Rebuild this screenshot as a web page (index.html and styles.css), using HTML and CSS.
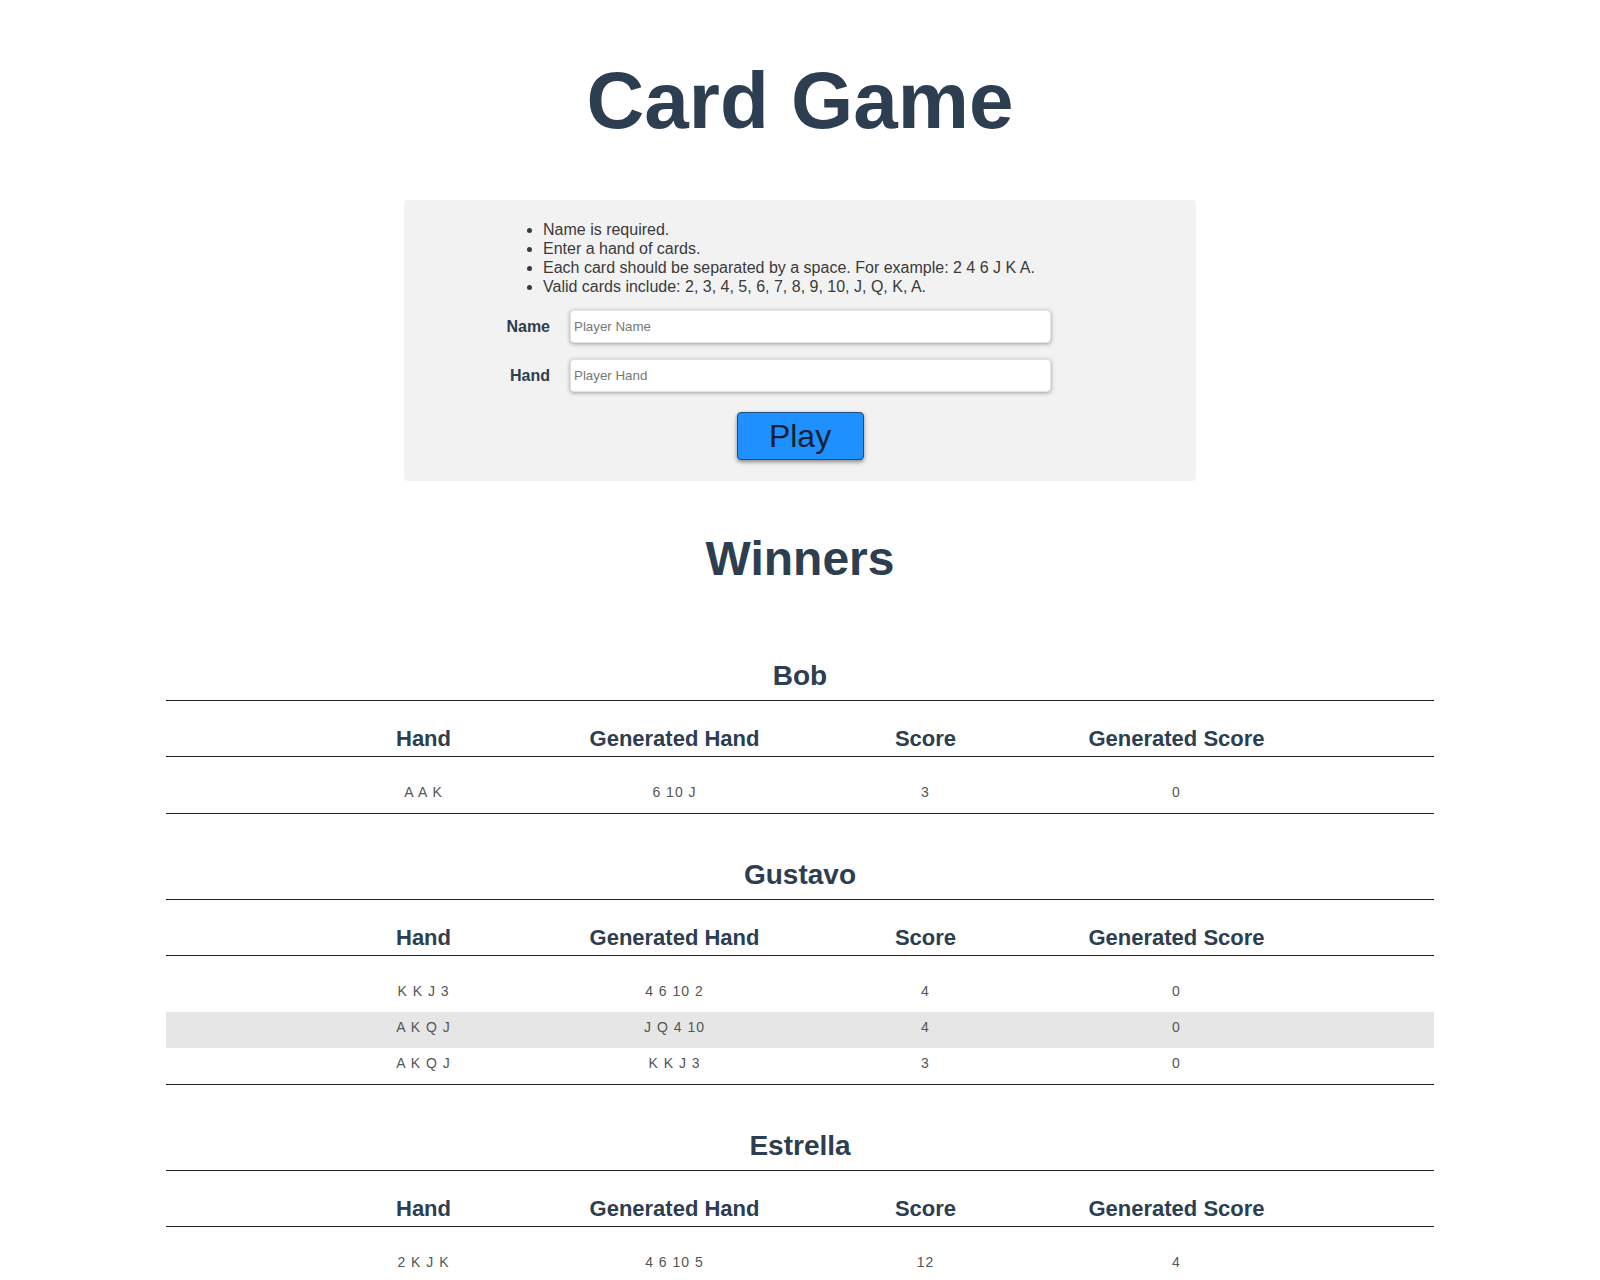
FILE: index.html
```html
<!DOCTYPE html>
<html lang="en">
<head>
<meta charset="utf-8">
<title>Card Game</title>
<link rel="stylesheet" href="styles.css">
</head>
<body>
<div class="app">
  <h1 class="title">Card Game</h1>

  <form class="panel">
    <div class="panel-inner">
      <ul class="rules">
        <li>Name is required.</li>
        <li>Enter a hand of cards.</li>
        <li>Each card should be separated by a space. For example: 2 4 6 J K A.</li>
        <li>Valid cards include: 2, 3, 4, 5, 6, 7, 8, 9, 10, J, Q, K, A.</li>
      </ul>
      <div class="field">
        <label class="field-label" for="name">Name</label>
        <input class="field-input" id="name" type="text" placeholder="Player Name">
      </div>
      <div class="field">
        <label class="field-label" for="hand">Hand</label>
        <input class="field-input" id="hand" type="text" placeholder="Player Hand">
      </div>
    </div>
    <div class="actions">
      <button class="play-btn" type="button">Play</button>
    </div>
  </form>

  <h2 class="winners-title">Winners</h2>

  <section class="player">
    <h3 class="player-name">Bob</h3>
    <div class="scores">
      <div class="row head"><div>Hand</div><div>Generated Hand</div><div>Score</div><div>Generated Score</div></div>
      <div class="rows">
        <div class="row"><div>A A K</div><div>6 10 J</div><div>3</div><div>0</div></div>
      </div>
    </div>
  </section>

  <section class="player">
    <h3 class="player-name">Gustavo</h3>
    <div class="scores">
      <div class="row head"><div>Hand</div><div>Generated Hand</div><div>Score</div><div>Generated Score</div></div>
      <div class="rows">
        <div class="row"><div>K K J 3</div><div>4 6 10 2</div><div>4</div><div>0</div></div>
        <div class="row"><div>A K Q J</div><div>J Q 4 10</div><div>4</div><div>0</div></div>
        <div class="row"><div>A K Q J</div><div>K K J 3</div><div>3</div><div>0</div></div>
      </div>
    </div>
  </section>

  <section class="player">
    <h3 class="player-name">Estrella</h3>
    <div class="scores">
      <div class="row head"><div>Hand</div><div>Generated Hand</div><div>Score</div><div>Generated Score</div></div>
      <div class="rows">
        <div class="row"><div>2 K J K</div><div>4 6 10 5</div><div>12</div><div>4</div></div>
      </div>
    </div>
  </section>
</div>
</body>
</html>
```

FILE: styles.css
```css
body {
  margin: 8px;
  font-family: "Liberation Sans", Arial, Helvetica, sans-serif;
  color: #2c3e50;
  background: #ffffff;
}

.app {
  text-align: center;
}

.title {
  font-size: 80px;
  font-weight: bold;
  line-height: normal;
  margin: 47px 0 53px;
}

.panel {
  width: 792px;
  margin: 0 auto;
  box-sizing: border-box;
  padding: 20px 0 21px;
  background: #f2f2f2;
  border-radius: 4px;
}

.panel-inner {
  width: 548px;
  margin-left: 99px;
  text-align: left;
}

.rules {
  margin: 0;
  padding-left: 40px;
  font-size: 16px;
  line-height: 19px;
  color: #3a3a3a;
}

.field {
  display: flex;
  align-items: center;
  margin-top: 14px;
}

.field + .field {
  margin-top: 16px;
}

.field-label {
  width: 47px;
  margin-right: 20px;
  text-align: right;
  font-size: 16px;
  font-weight: bold;
  color: #2c3e50;
}

.field-input {
  flex: 1;
  height: 33px;
  box-sizing: border-box;
  padding: 0 3px;
  border: 1px solid #e2e2e2;
  border-radius: 4px;
  background: #ffffff;
  box-shadow: 0 1px 4px rgba(0, 0, 0, 0.35);
  font-family: "Liberation Sans", Arial, sans-serif;
  font-size: 13.333px;
  color: #333333;
}

.field-input::placeholder {
  color: #777777;
}

.actions {
  display: flex;
  justify-content: center;
  margin-top: 20px;
}

.play-btn {
  height: 48px;
  width: 127px;
  box-sizing: border-box;
  padding: 0;
  background: #1e90ff;
  border: 1px solid #1d4f80;
  border-radius: 4px;
  box-shadow: 0 2px 4px rgba(0, 0, 0, 0.45);
  font-family: "Liberation Sans", Arial, sans-serif;
  font-size: 32px;
  color: #122131;
}

.winners-title {
  font-size: 48px;
  font-weight: bold;
  line-height: normal;
  margin: 50px 0 74px;
}

.player {
  margin-top: 45px;
}

.player-name {
  font-size: 28px;
  font-weight: bold;
  line-height: normal;
  margin: 0 0 8px;
}

.scores {
  width: 80%;
  margin: 0 auto;
  border-top: 1px solid #222222;
  border-bottom: 1px solid #222222;
}

.row {
  display: grid;
  grid-template-columns: repeat(4, 251px);
  justify-content: center;
  align-items: center;
  height: 36px;
  box-sizing: border-box;
  padding-bottom: 6px;
  font-size: 14px;
  letter-spacing: 1px;
  color: #555555;
}

.row.head {
  height: auto;
  padding: 25px 0 4px;
  border-bottom: 1px solid #222222;
  font-size: 22px;
  font-weight: bold;
  letter-spacing: 0;
  color: #2c3e50;
}

.rows {
  padding-top: 20px;
}

.rows .row:nth-child(2n) {
  background: #e6e6e6;
}
```
